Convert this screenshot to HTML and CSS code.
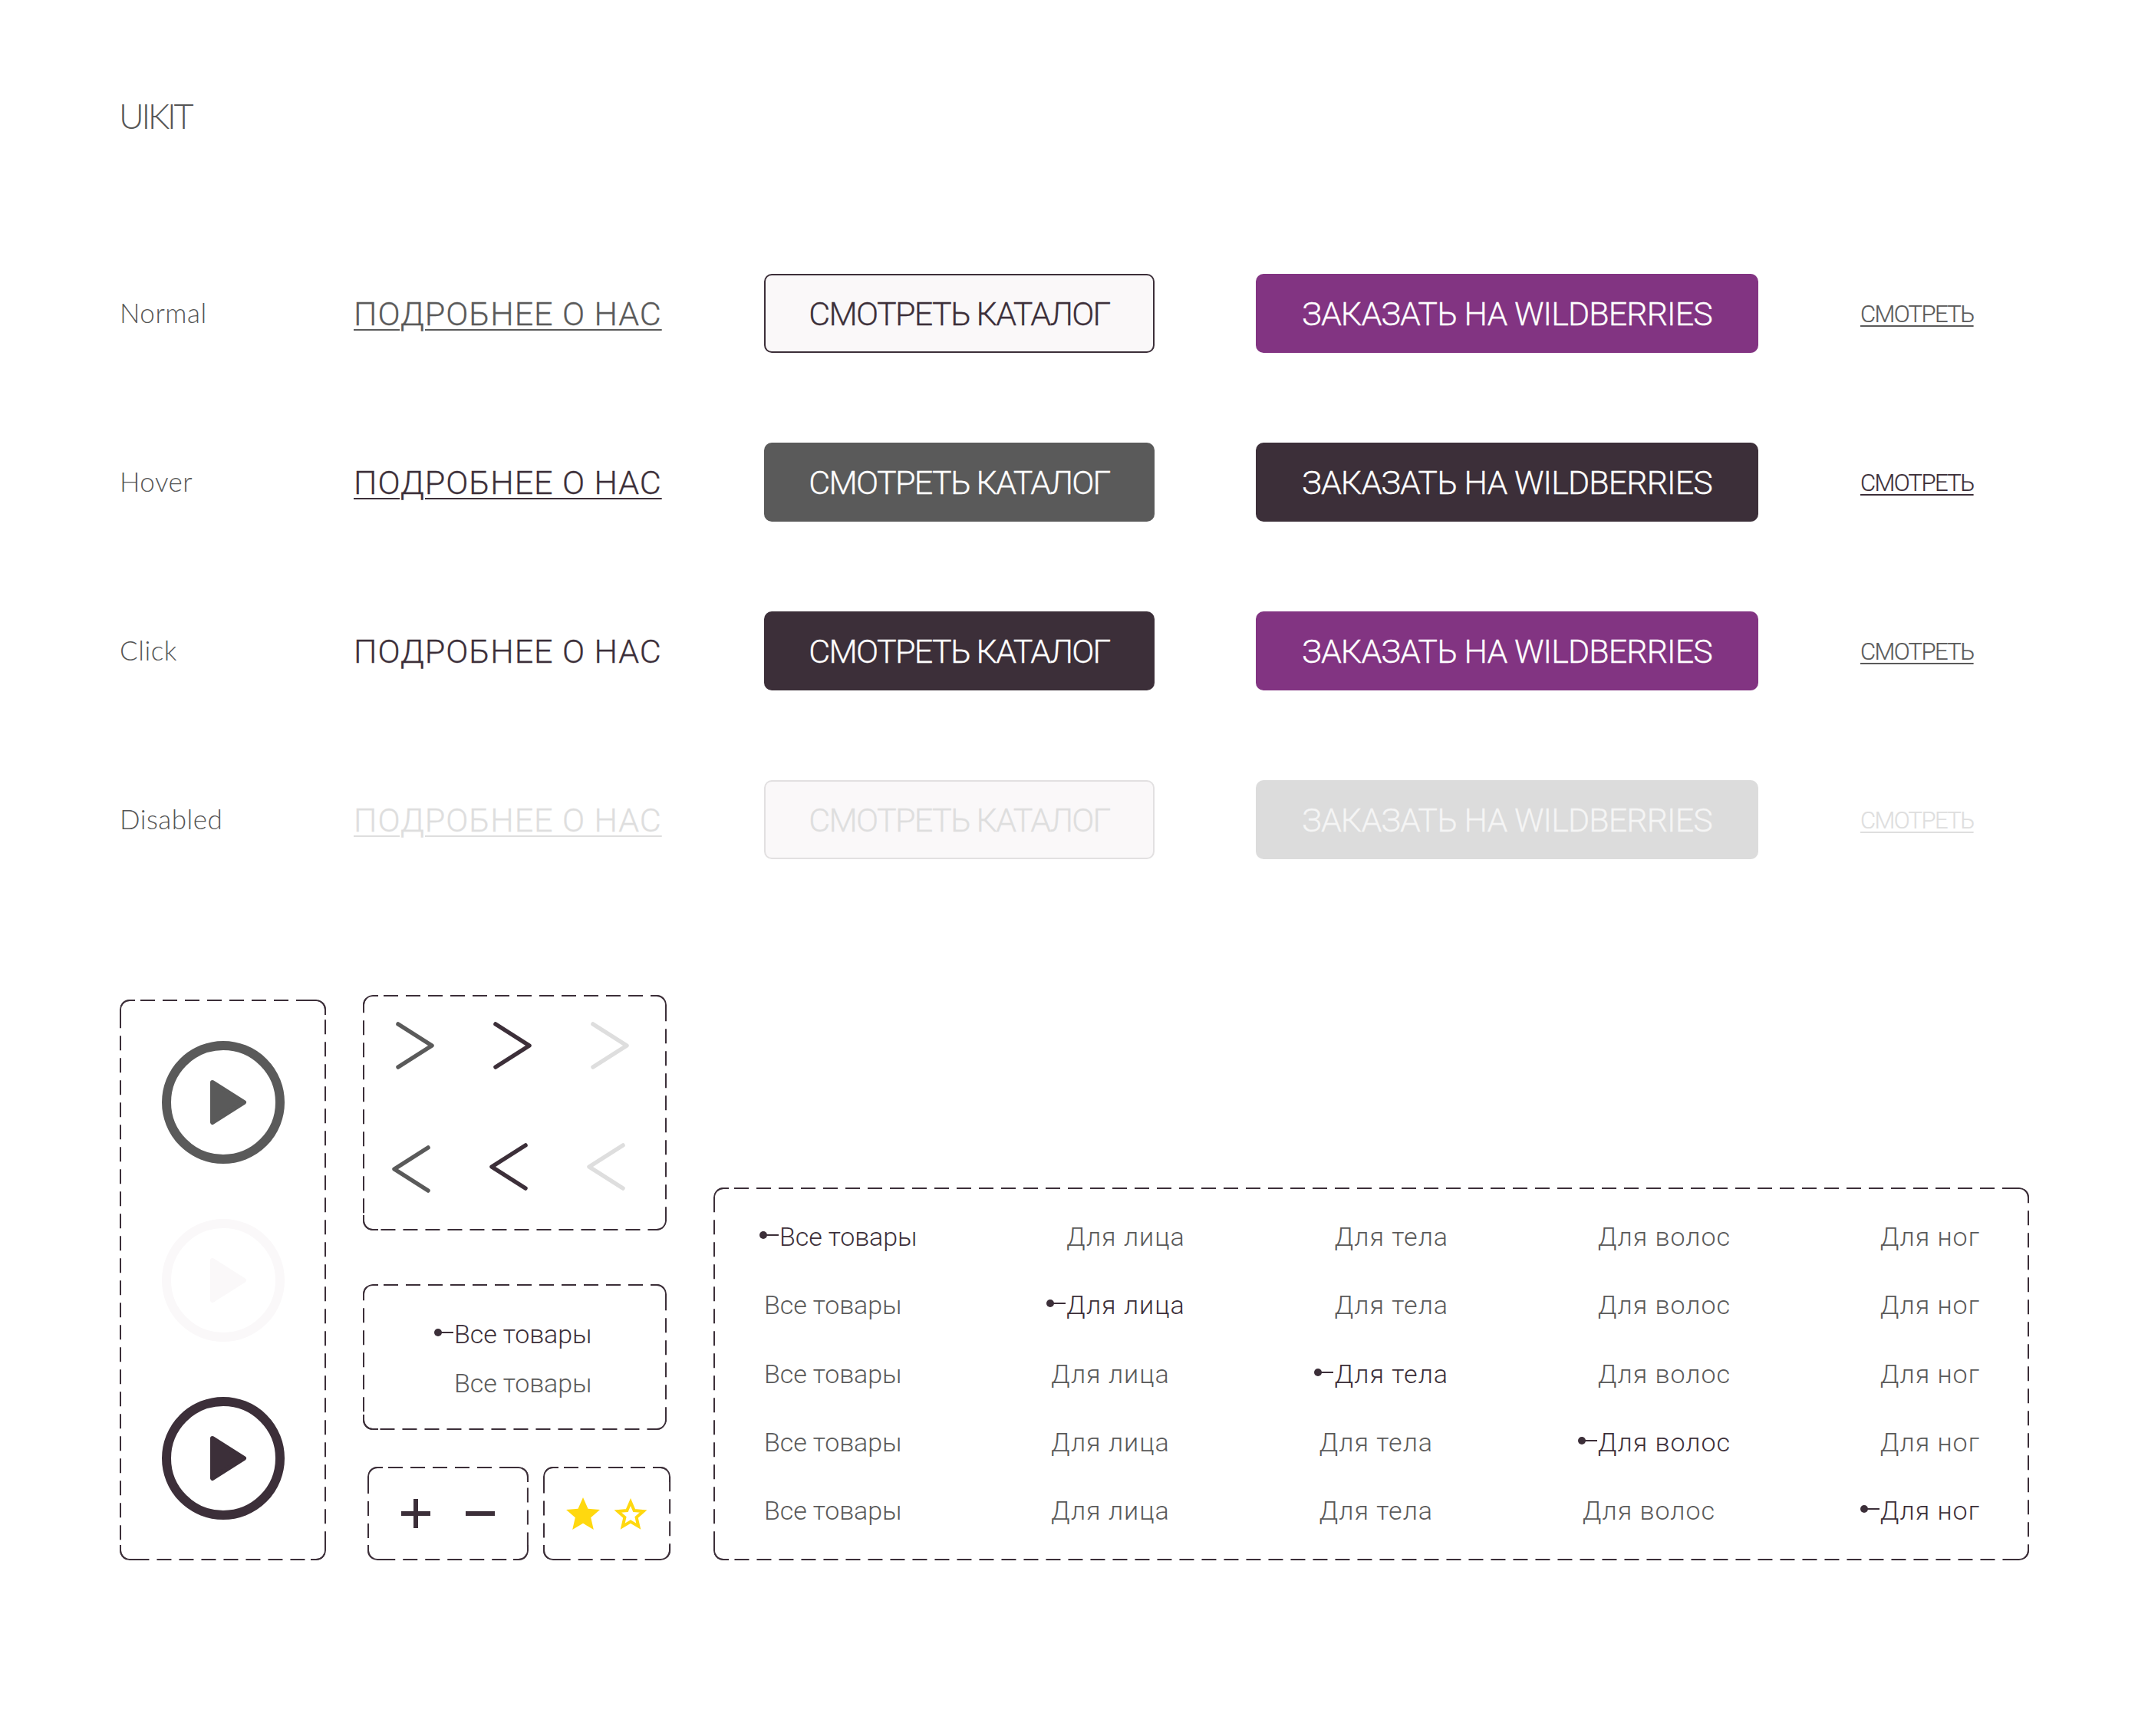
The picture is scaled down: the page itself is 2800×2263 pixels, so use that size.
FILE: index.html
```html
<!DOCTYPE html>
<html lang="ru">
<head>
<meta charset="utf-8">
<title>UIKIT</title>
<link rel="stylesheet" href="styles.css">
</head>
<body>
<main class="page">
  <h1 class="title">UIKIT</h1>
  <section class="states">
    <div class="label">Normal</div>
    <a class="link link-normal">ПОДРОБНЕЕ О НАС</a>
    <div class="btn btn-outline">СМОТРЕТЬ КАТАЛОГ</div>
    <div class="btn btn-wide btn-purple">ЗАКАЗАТЬ НА WILDBERRIES</div>
    <a class="mini mini-normal">СМОТРЕТЬ</a>

    <div class="label">Hover</div>
    <a class="link link-dark">ПОДРОБНЕЕ О НАС</a>
    <div class="btn btn-grey">СМОТРЕТЬ КАТАЛОГ</div>
    <div class="btn btn-wide btn-dark">ЗАКАЗАТЬ НА WILDBERRIES</div>
    <a class="mini mini-dark">СМОТРЕТЬ</a>

    <div class="label">Click</div>
    <a class="link link-plain">ПОДРОБНЕЕ О НАС</a>
    <div class="btn btn-dark">СМОТРЕТЬ КАТАЛОГ</div>
    <div class="btn btn-wide btn-purple">ЗАКАЗАТЬ НА WILDBERRIES</div>
    <a class="mini mini-normal">СМОТРЕТЬ</a>

    <div class="label">Disabled</div>
    <a class="link link-off">ПОДРОБНЕЕ О НАС</a>
    <div class="btn btn-outline-off">СМОТРЕТЬ КАТАЛОГ</div>
    <div class="btn btn-wide btn-off">ЗАКАЗАТЬ НА WILDBERRIES</div>
    <a class="mini mini-off">СМОТРЕТЬ</a>
  </section>

  <section class="kit">
    <div class="box box-play">
      <svg class="dash"><rect/></svg>
      <svg class="play play-grey" viewBox="0 0 160 160"><circle cx="80" cy="80" r="74"/><path d="M66 54 L107 80 L66 106 Z" class="tri"/></svg>
      <svg class="play play-off" viewBox="0 0 160 160"><circle cx="80" cy="80" r="74"/><path d="M66 54 L107 80 L66 106 Z" class="tri"/></svg>
      <svg class="play play-dark" viewBox="0 0 160 160"><circle cx="80" cy="80" r="74"/><path d="M66 54 L107 80 L66 106 Z" class="tri"/></svg>
    </div>

    <div class="stack">
      <div class="box box-arrows">
        <svg class="dash"><rect/></svg>
        <div class="arrow-row arrow-row-right">
          <svg class="chev c-grey" viewBox="0 0 52 62"><path d="M3 3 L47 31 L3 59"/></svg>
          <svg class="chev c-dark" viewBox="0 0 52 62"><path d="M3 3 L47 31 L3 59"/></svg>
          <svg class="chev c-off" viewBox="0 0 52 62"><path d="M3 3 L47 31 L3 59"/></svg>
        </div>
        <div class="arrow-row arrow-row-left">
          <svg class="chev c-grey c-low" viewBox="0 0 52 62"><path d="M49 3 L5 31 L49 59"/></svg>
          <svg class="chev c-dark" viewBox="0 0 52 62"><path d="M49 3 L5 31 L49 59"/></svg>
          <svg class="chev c-off" viewBox="0 0 52 62"><path d="M49 3 L5 31 L49 59"/></svg>
        </div>
      </div>

      <div class="box box-menu">
        <svg class="dash"><rect/></svg>
        <div class="item item-a active">Все товары</div>
        <div class="item item-a">Все товары</div>
      </div>

      <div class="tools">
        <div class="box box-math">
          <svg class="dash"><rect/></svg>
          <svg class="math" viewBox="0 0 38 38"><path d="M0 19 H38 M19 0 V38"/></svg>
          <svg class="math" viewBox="0 0 38 38"><path d="M0 19 H38"/></svg>
        </div>
        <div class="box box-stars">
          <svg class="dash"><rect/></svg>
          <svg class="star star-full" viewBox="0 0 44 42"><path d="M22 0 L28.500 14.800 L44 16 L32.200 26.300 L35.800 42 L22 33.700 L8.200 42 L11.800 26.300 L0 16 L15.500 14.800 Z"/></svg>
          <svg class="star star-empty" viewBox="0 0 44 42"><path d="M22 6 L26.700 17 L38.600 18.100 L29.600 26 L32.300 37.700 L22 31.500 L11.700 37.700 L14.400 26 L5.400 18.100 L17.300 17 Z"/></svg>
        </div>
      </div>
    </div>

    <div class="box box-table">
      <svg class="dash"><rect/></svg>
      <div class="tab-row">
        <div class="item item-a active">Все товары</div><div class="item item-b">Для лица</div><div class="item item-c">Для тела</div><div class="item item-d">Для волос</div><div class="item item-e">Для ног</div>
      </div>
      <div class="tab-row">
        <div class="item item-a">Все товары</div><div class="item item-b active">Для лица</div><div class="item item-c">Для тела</div><div class="item item-d">Для волос</div><div class="item item-e">Для ног</div>
      </div>
      <div class="tab-row">
        <div class="item item-a">Все товары</div><div class="item item-b">Для лица</div><div class="item item-c active">Для тела</div><div class="item item-d">Для волос</div><div class="item item-e">Для ног</div>
      </div>
      <div class="tab-row">
        <div class="item item-a">Все товары</div><div class="item item-b">Для лица</div><div class="item item-c">Для тела</div><div class="item item-d active">Для волос</div><div class="item item-e">Для ног</div>
      </div>
      <div class="tab-row">
        <div class="item item-a">Все товары</div><div class="item item-b">Для лица</div><div class="item item-c">Для тела</div><div class="item item-d">Для волос</div><div class="item item-e active">Для ног</div>
      </div>
    </div>
  </section>
</main>
</body>
</html>
```
FILE: styles.css
```css
* { box-sizing: border-box; }
html, body { margin: 0; background: #fff; }
body { font-family: Roboto, "Noto Sans", sans-serif; font-weight: 300; color: #5a5a5a; }
.page { width: 2800px; height: 2263px; padding: 124px 0 0 156px; }

.title { margin: 0 0 0 -1px; font-size: 45px; line-height: 54px; color: #555; letter-spacing: -3.300px; font-family: Lato, Roboto, sans-serif; font-weight: 300; }

.states {
  display: grid;
  grid-template-columns: 305px 535px 641px 788px auto;
  grid-auto-rows: 103px;
  row-gap: 117px;
  align-items: center;
  justify-items: start;
  margin-top: 179px;
}
.label { font-size: 35px; line-height: 42px; padding-bottom: 3px; letter-spacing: 0.5px; font-family: Lato, Roboto, sans-serif; font-weight: 300; color: #555; }
.link { font-size: 43px; line-height: 50px; letter-spacing: 0.950px; text-decoration: underline; text-decoration-thickness: 2px; text-underline-offset: 5px; font-weight: 300; -webkit-text-stroke: 0.3px currentColor; }
.link-normal { color: #5a5a5a; }
.link-dark { color: #3c2f39; }
.link-plain { color: #3c2f39; text-decoration: none; }
.link-off { color: #dedede; }

.btn {
  width: 509px; height: 103px;
  display: flex; align-items: center; justify-content: center;
  border-radius: 10px;
  font-size: 43px; font-weight: 300; letter-spacing: -1.700px;
  border: 2px solid transparent;
  -webkit-text-stroke: 0.3px currentColor;
}
.btn-wide { width: 655px; letter-spacing: -0.900px; }
.btn-outline { background: #faf8f9; border-color: #3c2f39; color: #3c2f39; }
.btn-outline-off { background: #faf8f9; border-color: #e2e0e1; color: #dedede; }
.btn-grey { background: #5a5a5a; color: #fff; }
.btn-dark { background: #3c2f39; color: #fff; }
.btn-purple { background: #823482; color: #fff; }
.btn-off { background: #dcdcdc; color: #f5f5f5; }

.mini { font-size: 31px; line-height: 38px; padding-top: 2px; letter-spacing: -1.650px; text-decoration: underline; text-decoration-thickness: 2px; text-underline-offset: 4px; font-weight: 300; -webkit-text-stroke: 0.2px currentColor; }
.mini-normal { color: #5a5a5a; }
.mini-dark { color: #3c2f39; }
.mini-off { color: #dedede; }

.kit { display: flex; align-items: flex-end; margin-top: 177px; height: 737px; }
.box { position: relative; }
.box::before {
  content: ""; position: absolute; inset: 0;
  border: 2px solid #3c2f39; border-radius: 13px;
  -webkit-mask:
    linear-gradient(#000 0 0) top left / 20px 20px no-repeat,
    linear-gradient(#000 0 0) top right / 20px 20px no-repeat,
    linear-gradient(#000 0 0) bottom left / 20px 20px no-repeat,
    linear-gradient(#000 0 0) bottom right / 20px 20px no-repeat;
  mask:
    linear-gradient(#000 0 0) top left / 20px 20px no-repeat,
    linear-gradient(#000 0 0) top right / 20px 20px no-repeat,
    linear-gradient(#000 0 0) bottom left / 20px 20px no-repeat,
    linear-gradient(#000 0 0) bottom right / 20px 20px no-repeat;
}
.dash { position: absolute; inset: 0; width: 100%; height: 100%; overflow: visible; pointer-events: none; }
.dash rect {
  x: 1px; y: 1px;
  width: calc(100% - 2px); height: calc(100% - 2px);
  rx: 12px;
  fill: none; stroke: #3c2f39; stroke-width: 2px; stroke-dasharray: 19 10; stroke-dashoffset: 15;
}

.box-play { width: 269px; height: 731px; margin-right: 48px; display: flex; flex-direction: column; align-items: center; padding-top: 54px; gap: 72px; }
.play { width: 160px; height: 160px; display: block; flex: none; }
.play circle { fill: none; stroke-width: 12; }
.play .tri { stroke-width: 6; stroke-linejoin: round; }
.play-grey circle { stroke: #5a5a5a; } .play-grey .tri { fill: #5a5a5a; stroke: #5a5a5a; }
.play-off circle { stroke: #faf8f9; } .play-off .tri { fill: #faf8f9; stroke: #faf8f9; }
.play-dark circle { stroke: #3c2f39; } .play-dark .tri { fill: #3c2f39; stroke: #3c2f39; }

.stack { width: 401px; height: 737px; margin-right: 56px; display: flex; flex-direction: column; }
.box-arrows { width: 396px; height: 307px; margin-bottom: 70px; }
.arrow-row { display: flex; position: absolute; gap: 75px; }
.arrow-row-right { left: 43px; top: 35px; }
.arrow-row-left { left: 36px; top: 193px; }
.chev { width: 52px; height: 62px; display: block; fill: none; stroke-width: 5.500; stroke-linecap: round; stroke-linejoin: round; }
.c-low { margin-top: 3px; }
.c-grey { stroke: #5a5a5a; }
.c-dark { stroke: #3c2f39; }
.c-off { stroke: #dedede; }

.box-menu { width: 396px; height: 190px; margin-bottom: 48px; display: flex; flex-direction: column; align-items: flex-start; padding: 45px 0 0 119px; gap: 24px; }
.item { position: relative; font-size: 34px; line-height: 40px; letter-spacing: 1px; color: #5a5a5a; white-space: nowrap; }
.item-a { letter-spacing: -0.100px; }
.item.active { color: #3c2f39; padding-left: 20px; }
.box-menu .item { padding-left: 0; }
.item.active::before { content: ""; position: absolute; left: -6px; top: 50%; width: 10px; height: 10px; margin-top: -7px; border-radius: 50%; background: #3c2f39; }
.item.active::after { content: ""; position: absolute; left: 0; top: 50%; width: 19px; height: 2px; margin-top: -3px; background: #3c2f39; }
.box-menu .item.active::before { left: -26px; }
.box-menu .item.active::after { left: -20px; }

.tools { display: flex; padding-left: 6px; gap: 19px; }
.box-math { width: 211px; height: 122px; display: flex; align-items: center; justify-content: center; gap: 46px; }
.math { width: 38px; height: 38px; display: block; fill: none; stroke: #3c2f39; stroke-width: 6; }
.box-stars { width: 167px; height: 122px; display: flex; align-items: center; justify-content: center; gap: 18px; }
.star { width: 44px; height: 42px; display: block; }
.star-full { fill: #ffd80f; }
.star-empty { fill: none; stroke: #ffd80f; stroke-width: 4; }

.box-table { width: 1715px; height: 486px; display: flex; flex-direction: column; padding: 44px 64px 0 66px; gap: 49.300px; }
.tab-row { display: flex; justify-content: space-between; }
```
